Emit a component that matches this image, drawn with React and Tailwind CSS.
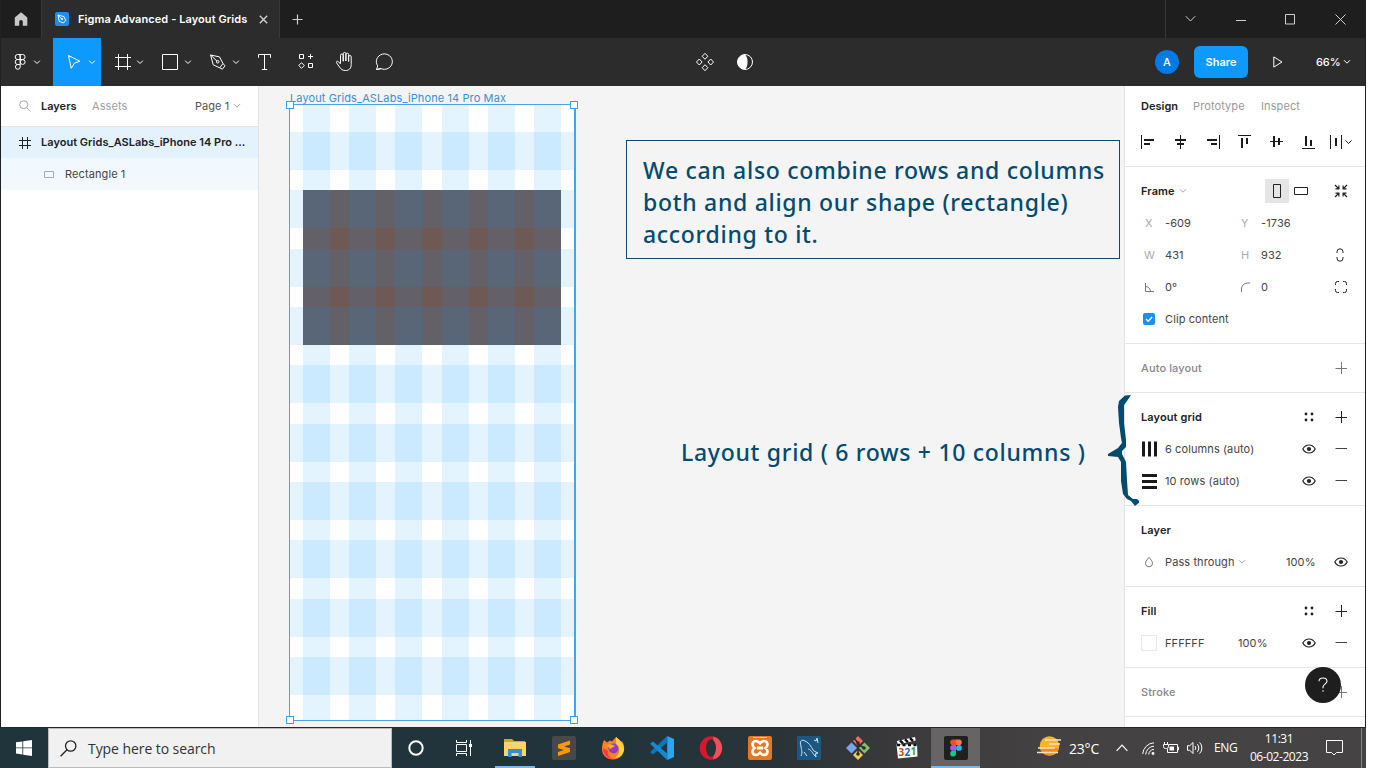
import React from 'react';

const UI = "font-['Inter',sans-serif]";
const SEGOE = "font-['Open_Sans','Noto_Sans',sans-serif]";

/* Line drawing with a pixel-sized view box */
function Draw({ w = 16, h = 16, c = '', children, sw = 1 }) {
  return (
    <svg width={w} height={h} viewBox={`0 0 ${w} ${h}`} className={`block shrink-0 ${c}`} fill="none" stroke="currentColor" strokeWidth={sw}>
      {children}
    </svg>
  );
}

function Chevron({ c = '' }) {
  return <Draw w={8} h={6} c={c}><path d="M1 1.2 4 4.2 7 1.2" /></Draw>;
}

/* ---------- Title bar ---------- */
function TitleBar() {
  return (
    <div className="flex h-[38px] shrink-0 bg-[#1e1e1e] text-[#d0d0d0]">
      <div className="flex w-[41px] items-center justify-center border-r border-[#383838]">
        <Draw w={14} h={14} c="text-[#c9c9c9]">
          <path d="M7 .3 13.3 5.6V13.8H8.8V9.8a1.8 1.8 0 0 0-3.6 0V13.8H.8V5.6Z" fill="currentColor" stroke="none" />
        </Draw>
      </div>
      <div className="flex w-[238px] items-center border-r border-[#383838] bg-[#2c2c2c] pl-[13px]">
        <Draw w={14} h={14}>
          <rect width="14" height="14" rx="2" fill="#1b8ff0" stroke="none" />
          <g stroke="#fff" strokeWidth=".9">
            <path d="M3 3 4.2 9.3 8.4 11 10.7 8.6 9 4.6Z" />
            <path d="M3 3 6.6 6.8" />
            <circle cx="7" cy="7" r=".8" />
          </g>
        </Draw>
        <span className="ml-[9px] text-[11px] font-semibold tracking-[0.08px] whitespace-pre text-white">Figma Advanced - Layout Grids</span>
        <Draw w={9} h={9} c="ml-[12px]" sw={1.4}><path d="M.8.8 8.2 8.2M8.2.8.8 8.2" /></Draw>
      </div>
      <div className="flex items-center pl-[12px]">
        <Draw w={11} h={11} sw={1.2}><path d="M5.5.5V10.5M.5 5.5H10.5" /></Draw>
      </div>
      <div className="ml-auto flex w-[200px] items-center border-l border-[#383838]">
        <div className="flex w-[50px] justify-center"><Draw w={11} h={8}><path d="M.8 1.2 5.5 6 10.2 1.2" /></Draw></div>
        <div className="flex w-[50px] justify-center"><Draw w={10} h={11}><path d="M0 6.5H10" /></Draw></div>
        <div className="flex w-[50px] justify-center"><Draw w={10} h={11}><path d="M.5.5H9.5V10H.5Z" /></Draw></div>
        <div className="flex w-[50px] justify-center"><Draw w={11} h={11}><path d="M.5.5 10.5 10.5M10.5.5.5 10.5" /></Draw></div>
      </div>
    </div>
  );
}

/* ---------- Toolbar ---------- */
const caret = <path d="M36.2 22.7 39 25.5 41.8 22.7" />;

function Tool({ w = 48, active, children }) {
  return (
    <div className={active ? 'bg-[#0d99ff] text-white' : 'text-white'}>
      <Draw w={w} h={48}>{children}</Draw>
    </div>
  );
}

function Toolbar() {
  return (
    <div className="flex h-12 shrink-0 bg-[#2c2c2c]">
      <Tool w={52}>
        <path d="M19 16.5H16.7a2.4 2.4 0 0 0 0 5H19.2ZM19.2 16.5H21.6a2.4 2.4 0 0 1 0 5H19.2ZM19 21.5H16.7a2.4 2.4 0 0 0 0 5H19.2ZM19.2 26.5H16.7a2.4 2.4 0 1 0 2.5 2.6Z" />
        <circle cx="21.7" cy="24" r="2.4" />
        <path d="M33.2 22.7 36 25.5 38.8 22.7" />
      </Tool>
      <Tool active>
        <path d="M15.5 17.5 27 23.3 21.5 25 18.2 30.3Z" />
        {caret}
      </Tool>
      <Tool>
        <path d="M17.5 16V32M26.5 16V32M14 19.5H30M14 28.5H30" />
        {caret}
      </Tool>
      <Tool>
        <path d="M13.5 16.5H28.5V31.5H13.5Z" />
        {caret}
      </Tool>
      <Tool>
        <path d="M13.6 17 16.2 26.8 22.7 29.8 26 25.5 22.5 18.9ZM13.6 17 20.2 23.3M22.7 29.8 25.4 31.2 28 27.8 26 25.5" />
        <circle cx="20.7" cy="23.8" r="1.3" />
        {caret}
      </Tool>
      <Tool w={40}>
        <path d="M13.5 19.8V16.5H25.5V19.8M19.5 16.5V31.5M16.8 31.5H22.2" />
      </Tool>
      <Tool w={40}>
        <path d="M14.5 16.5H18.5V20.5H14.5ZM23.5 25.5H27.5V29.5H23.5ZM16.5 24.7 19.3 27.5 16.5 30.3 13.7 27.5ZM25.5 16V21M23 18.5H28" />
      </Tool>
      <Tool w={40}>
        <path d="M15.5 25.5V17.3a1.35 1.35 0 0 1 2.7 0V23.5M18.2 23V15.8a1.35 1.35 0 0 1 2.7 0V23M20.9 23V16.5a1.35 1.35 0 0 1 2.7 0V23.5M23.6 23.5V18.8a1.3 1.3 0 0 1 2.6 0V26.5C26.2 30.5 24 32.5 20.5 32.5 17.5 32.5 16 31.3 14.5 29L11.5 24.7C10.9 23.5 12.5 22.6 13.5 23.7L15.5 26" />
      </Tool>
      <Tool w={40}>
        <path d="M11.5 31.5 12.7 27.9A8 7.7 0 1 1 16 30.6ZM16 30.6 11.5 31.5" />
      </Tool>
      <div className="ml-[280px] flex items-center text-white">
        <Draw w={40} h={48}>
          <path d="M20 15.3 22.8 18.3 20 21.3 17.2 18.3ZM20 26.7 22.8 29.7 20 32.7 17.2 29.7ZM14.3 21 17.1 24 14.3 27 11.5 24ZM25.7 21 28.5 24 25.7 27 22.9 24Z" />
        </Draw>
        <Draw w={40} h={48}>
          <circle cx="20" cy="24" r="7.5" />
          <path d="M20 16.5a7.5 7.5 0 0 0 0 15c1.8-1.6 2.6-4.5 2.6-7.5s-.8-5.9-2.6-7.5Z" fill="currentColor" stroke="none" />
        </Draw>
      </div>
      <div className="ml-auto flex items-center text-[11px] font-medium text-white">
        <div className="flex size-6 items-center justify-center rounded-full bg-[#007be5]">A</div>
        <div className="ml-[15px] flex h-8 w-[54px] items-center justify-center rounded-md bg-[#0d99ff] font-semibold">Share</div>
        <Draw w={10} h={12} c="ml-[25px]"><path d="M.8.9V11.1L9 6Z" /></Draw>
        <span className="ml-[33px] w-[27px] tracking-[-0.1px]">66%</span>
        <Chevron c="mr-[14px]" />
      </div>
    </div>
  );
}

/* ---------- Layers panel ---------- */
function LayersPanel() {
  return (
    <div className="flex w-[258px] shrink-0 flex-col border-r border-[#e2e2e2] bg-white text-[11px] text-[#333]">
      <div className="flex h-[41px] items-center border-b border-[#e5e5e5] pl-[18px]">
        <Draw w={12} h={12} c="text-[#a5a5a5]"><circle cx="4.7" cy="4.7" r="4" /><path d="M7.6 7.6 11.5 11.5" /></Draw>
        <span className="ml-[10px] w-[51px] font-semibold text-[#222]">Layers</span>
        <span className="w-[103px] tracking-[0.1px] text-[#a0a0a0]">Assets</span>
        <span className="w-[38px] tracking-[0.05px] text-[#555]">Page 1</span>
        <Chevron c="text-[#a0a0a0]" />
      </div>
      <div className="flex h-[31px] items-center bg-[#e4f2fd] pl-[18px]">
        <Draw w={12} h={12} c="text-[#222]"><path d="M3.5 0V12M8.5 0V12M0 3.5H12M0 8.5H12" /></Draw>
        <span className="ml-[10px] font-semibold tracking-[0.02px] whitespace-nowrap text-[#222]">Layout Grids_ASLabs_iPhone 14 Pro ...</span>
      </div>
      <div className="flex h-8 items-center bg-[#f2f9fe] pl-[43px]">
        <Draw w={10} h={7} c="text-[#a5abb0]"><path d="M.5.5H9.5V6.5H.5Z" /></Draw>
        <span className="ml-[11px] tracking-[0.1px] text-[#444]">Rectangle 1</span>
      </div>
    </div>
  );
}

/* ---------- Canvas ---------- */
function Handle({ c }) {
  return <div className={`absolute size-2 border border-[#3f9fe0] bg-white ${c}`} />;
}

function Canvas() {
  return (
    <div className={`relative min-w-0 flex-1 overflow-hidden bg-[#f4f4f4] ${UI}`}>
      <div className="absolute top-[4px] left-[31px] text-[11px] tracking-[0.11px] whitespace-nowrap text-[#3b8fd6]">Layout Grids_ASLabs_iPhone 14 Pro Max</div>
      <div className="absolute top-[18px] left-[30px] h-[617px] w-[287px] border border-[#4ba3e3] border-r-2 bg-white">
        <div className="absolute top-[85px] left-[13px] h-[155px] w-[258px] bg-[#6f5955]" />
        <div className="absolute inset-0 flex justify-between pr-[13px] pl-[13px]">
          {[0, 1, 2, 3, 4, 5].map((i) => <div key={i} className="w-[27px] bg-[#0099ff]/[0.105]" />)}
        </div>
        <div className="absolute inset-0 flex flex-col justify-between pt-[27px] pb-[25px]">
          {[0, 1, 2, 3, 4, 5, 6, 7, 8, 9].map((i) => <div key={i} className="h-[38px] bg-[#0099ff]/[0.105]" />)}
        </div>
        <Handle c="-top-1 -left-1" />
        <Handle c="-top-1 -right-1" />
        <Handle c="-bottom-1 -left-1" />
        <Handle c="-right-1 -bottom-1" />
      </div>
      <div className="absolute top-[54px] left-[367px] h-[119px] w-[494px] border border-[#0f4a6c] pt-[13px] pl-4 font-['Noto_Sans',sans-serif] text-[23px] leading-8 font-medium whitespace-nowrap text-[#004b6e]">
        <div className="tracking-[0.7px]">We can also combine rows and columns</div>
        <div className="tracking-[0.7px]">both and align our shape (rectangle)</div>
        <div className="tracking-[0.7px]">according to it.</div>
      </div>
      <div className="absolute top-[350px] left-[422px] font-['Noto_Sans',sans-serif] text-[23px] leading-8 font-medium tracking-[0.7px] whitespace-nowrap text-[#004b6e]">Layout grid ( 6 rows + 10 columns )</div>
    </div>
  );
}

/* ---------- Design panel ---------- */
const Plus = ({ c = '' }) => <Draw w={12} h={12} c={c}><path d="M6.5 0V12M.5 6.5H12" /></Draw>;
const Minus = () => <Draw w={12} h={12}><path d="M.5 5.5H12" /></Draw>;
const Dots = () => (
  <Draw w={10} h={10}>
    <g fill="currentColor" stroke="none">
      <circle cx="2" cy="2" r="1.4" /><circle cx="8" cy="2" r="1.4" /><circle cx="2" cy="8" r="1.4" /><circle cx="8" cy="8" r="1.4" />
    </g>
  </Draw>
);
const Eye = () => (
  <Draw w={14} h={10} sw={1.2}>
    <path d="M.8 5C2.2 2.4 4.4 1 7 1s4.8 1.4 6.2 4C11.8 7.6 9.6 9 7 9S2.2 7.6.8 5Z" />
    <circle cx="7" cy="5" r="2.1" fill="currentColor" stroke="none" />
  </Draw>
);

function Row({ children, c = '' }) {
  return <div className={`flex h-8 items-center ${c}`}>{children}</div>;
}
function Section({ children, c = '' }) {
  return <div className={`border-b border-[#e5e5e5] pl-4 ${c}`}>{children}</div>;
}
/* Right-aligned pair of row actions */
function Actions({ children }) {
  return <div className="ml-auto flex items-center gap-[26px] pr-[18px]">{children}</div>;
}

function DesignPanel() {
  return (
    <div className="relative w-[241px] shrink-0 border-l border-[#e2e2e2] bg-white text-[11px] tracking-[0.1px] text-[#444]">
      <div className="h-[641px] overflow-hidden">
        <Section c="h-[81px]">
          <div className="flex h-10 items-center text-[#999]">
            <span className="w-[52px] font-semibold tracking-[0.02px] text-[#222]">Design</span>
            <span className="w-[68px]">Prototype</span>
            <span>Inspect</span>
          </div>
          <div className="flex h-8 items-center text-[#1a1a1a]">
            <Draw w={32} h={16} sw={2}>
              <path d="M.5 1V15" strokeWidth="1" /><path d="M3 6H13M3 10H9" />
            </Draw>
            <Draw w={32} h={16} sw={2}>
              <path d="M7.5 1V15" strokeWidth="1" /><path d="M2 6H13M4 10H11" />
            </Draw>
            <Draw w={32} h={16} sw={2}>
              <path d="M14.5 1V15" strokeWidth="1" /><path d="M2 6H12M6 10H12" />
            </Draw>
            <Draw w={32} h={16} sw={2}>
              <path d="M1 1.5H14" strokeWidth="1" /><path d="M5 4V14M10 4V10" />
            </Draw>
            <Draw w={32} h={16} sw={2}>
              <path d="M1 7.5H14" strokeWidth="1" /><path d="M5 2V13M10 4V11" />
            </Draw>
            <Draw w={29} h={16} sw={2}>
              <path d="M1 14.5H14" strokeWidth="1" /><path d="M5 2V12M10 6V12" />
            </Draw>
            <Draw w={24} h={16} sw={2}>
              <path d="M.5 1V15M11.5 1V15" strokeWidth="1" /><path d="M6 4V12" /><path d="M15.5 6.5 18.5 9.5 21.5 6.5" strokeWidth="1" />
            </Draw>
          </div>
        </Section>

        <Section c="h-[177px] pt-2">
          <Row>
            <span className="w-[38px] font-semibold tracking-[0.1px] text-[#222]">Frame</span>
            <Chevron c="text-[#a5a5a5]" />
            <div className="ml-[78px] flex size-6 items-center justify-center bg-[#e5e5e5] text-[#222]">
              <Draw w={8} h={14}><path d="M.5.5H7.5V13.5H.5Z" /></Draw>
            </div>
            <Draw w={14} h={8} c="ml-[5px] text-[#222]"><path d="M.5.5H13.5V7.5H.5Z" /></Draw>
            <Draw w={14} h={14} c="ml-[26px] text-[#222]" sw={1.2}>
              <path d="M1 1 4.5 4.5M1.5 4.9H4.9V1.5M13 1 9.5 4.5M9.1 1.5V4.9H12.5M1 13 4.5 9.5M1.5 9.1H4.9V12.5M13 13 9.5 9.5M12.5 9.1H9.1V12.5" />
            </Draw>
          </Row>
          <Row>
            <span className="w-6 pl-1 text-[#aaa]">X</span><span className="w-[76px]">-609</span>
            <span className="w-5 text-[#aaa]">Y</span><span>-1736</span>
          </Row>
          <Row>
            <span className="w-6 pl-[3px] text-[#aaa]">W</span><span className="w-[76px]">431</span>
            <span className="w-5 text-[#aaa]">H</span><span>932</span>
            <Draw w={8} h={14} c="mr-[21px] ml-auto text-[#222]"><path d="M1 5V3.8a3 3 0 0 1 6 0V5M1 9V10.2a3 3 0 0 0 6 0V9" /></Draw>
          </Row>
          <Row>
            <div className="w-6 pl-1"><Draw w={9} h={9} c="text-[#777]"><path d="M.5 0V8.5H9M.5 3.5A5 5 0 0 1 5.5 8.5" /></Draw></div>
            <span className="w-[76px]">0°</span>
            <div className="w-5"><Draw w={9} h={10} c="text-[#777]"><path d="M.5 10V7A6 6 0 0 1 6.5 1H9" /></Draw></div>
            <span>0</span>
            <Draw w={12} h={12} c="mr-[18px] ml-auto text-[#222]"><path d="M.5 4V2.5a2 2 0 0 1 2-2H4M8 .5H9.5a2 2 0 0 1 2 2V4M11.5 8V9.5a2 2 0 0 1-2 2H8M4 11.5H2.5a2 2 0 0 1-2-2V8" /></Draw>
          </Row>
          <Row>
            <div className="ml-0.5 w-[22px]">
              <Draw w={12} h={12}><rect width="12" height="12" rx="2" fill="#1890ec" stroke="none" /><path d="M3 6 5.2 8.2 9.2 4" stroke="#fff" strokeWidth="1.3" /></Draw>
            </div>
            <span>Clip content</span>
          </Row>
        </Section>

        <Section c="flex h-[49px] items-center text-[#888]">
          <span className="font-medium tracking-[0.12px]">Auto layout</span>
          <Actions><Plus c="text-[#777]" /></Actions>
        </Section>

        <Section c="h-[113px] pt-2">
          <Row>
            <span className="font-semibold text-[#222]">Layout grid</span>
            <Actions><div className="-mr-[5px] text-[#222]"><Dots /></div><Plus c="text-[#222]" /></Actions>
          </Row>
          <Row>
            <Draw w={24} h={16} sw={3} c="text-[#1a1a1a]"><path d="M2.5.5V15.5M8.5.5V15.5M14.5.5V15.5" /></Draw>
            <span>6 columns (auto)</span>
            <Actions><div className="-mr-[7px] text-[#222]"><Eye /></div><Minus /></Actions>
          </Row>
          <Row>
            <Draw w={24} h={16} sw={3} c="text-[#1a1a1a]"><path d="M1 2.5H16M1 8.5H16M1 14.5H16" /></Draw>
            <span>10 rows (auto)</span>
            <Actions><div className="-mr-[7px] text-[#222]"><Eye /></div><Minus /></Actions>
          </Row>
        </Section>

        <Section c="h-[81px] pt-2">
          <Row><span className="font-semibold text-[#222]">Layer</span></Row>
          <Row>
            <Draw w={24} h={12} c="text-[#777]"><path d="M8 1.3C6.6 3.3 4.5 5 4.5 7.3a3.5 3.5 0 0 0 7 0C11.5 5 9.4 3.3 8 1.3Z" /></Draw>
            <span className="w-[73px]">Pass through</span>
            <Chevron c="text-[#a5a5a5]" />
            <span className="ml-10 w-12">100%</span>
            <div className="text-[#222]"><Eye /></div>
          </Row>
        </Section>

        <Section c="h-[81px] pt-2">
          <Row>
            <span className="font-semibold text-[#222]">Fill</span>
            <Actions><div className="-mr-[5px] text-[#222]"><Dots /></div><Plus c="text-[#222]" /></Actions>
          </Row>
          <Row>
            <div className="mr-2 size-4 border border-[#e8e8e8]" />
            <span className="w-[73px]">FFFFFF</span>
            <span>100%</span>
            <Actions><div className="-mr-[7px] text-[#222]"><Eye /></div><Minus /></Actions>
          </Row>
        </Section>

        <Section c="flex h-[49px] items-center text-[#888]">
          <span className="font-medium">Stroke</span>
          <Actions><Plus c="text-[#777]" /></Actions>
        </Section>
      </div>

      <div className="absolute top-[581px] left-[180px] flex size-9 items-center justify-center rounded-full bg-[#1e1e1e] text-white">
        <Draw w={10} h={16} sw={1.1}><path d="M1 4.3C1 2.3 2.6 1 5 1S9 2.3 9 4.3C9 7 5 7.2 5 10V11.2M5 13.3V14.8" /></Draw>
      </div>

      <svg width="32" height="114" viewBox="0 0 32 114" className="absolute top-[308px] -left-[18px]">
        <path d="M24 1 18 1.5 12 7 11 13 12 29 14 44 15 49 11 54 1 60 1 62 11 63 14 68 14 87 16 100 20 105 24 107 28 112 33 108 30 105 26 105 21 101 20 86 19 68 15 60 15 57 19 53 19 46 17 29 17 11 20 7Z" fill="#004b6e" />
      </svg>
    </div>
  );
}

/* ---------- Windows taskbar ---------- */
function App24({ children, open, active }) {
  return (
    <div className={`relative flex h-full w-[49px] items-center justify-center ${active ? 'bg-[#666464]' : ''}`}>
      <svg width="24" height="24" viewBox="0 0 24 24" fill="none" className="block">{children}</svg>
      {open && <div className={`absolute bottom-0 h-0.5 bg-[#76b9ed] ${active ? 'w-[49px]' : 'w-10'}`} />}
    </div>
  );
}

function Taskbar() {
  return (
    <div className={`flex h-[41px] w-[1366px] shrink-0 border-t border-[#26282a] bg-[linear-gradient(90deg,#20343b_0%,#21343b_45%,#2b3438_58%,#3b393b_66%,#434142_76%,#454344_100%)] text-white ${SEGOE}`}>
      <div className="flex w-12 items-center justify-center">
        <svg width="16" height="16" viewBox="0 0 16 16" fill="#fff"><path d="M0 2.3 6.4 1.4V7.5H0ZM7.2 1.3 16 0V7.5H7.2ZM0 8.3H6.4V14.5L0 13.6ZM7.2 8.3H16V16L7.2 14.7Z" /></svg>
      </div>
      <div className="flex w-[344px] items-center border border-[#b8bcbe] bg-[#f1f1f1] pl-[11px] text-[#333]">
        <Draw w={17} h={17} sw={1.3} c="text-[#222]"><circle cx="10.7" cy="6" r="5.2" /><path d="M7 9.8.6 16.2" /></Draw>
        <span className="ml-[11px] text-[14px] tracking-[-0.07px]">Type here to search</span>
      </div>
      <div className="flex w-12 items-center justify-center"><Draw w={16} h={16} sw={2}><circle cx="8" cy="8" r="6.7" /></Draw></div>
      <div className="flex w-[50px] items-center justify-center pr-0.5">
        <Draw w={16} h={16}><path d="M.5 0V2.5H10.5V0M.5 16V13.5H10.5V16M.5 4.5H10.5V11.5H.5ZM14.5 0V16" /><path d="M13 4H16V7H13Z" fill="currentColor" stroke="none" /></Draw>
      </div>
      <App24 open>
        <path d="M1 3H9L11 5H22V8H1Z" fill="#d9a520" /><path d="M1 6H23V20H1Z" fill="#fbd56b" /><path d="M5 13H19V21H15.5V17H8.5V21H5Z" fill="#3a8ed0" />
      </App24>
      <App24>
        <rect width="24" height="24" rx="2" fill="#484848" /><path d="M6 8.5 18 4.5V8.5L12.3 10.4 18 12.3V16L6 20V16L12 14 6 12.2Z" fill="#ff9800" />
      </App24>
      <App24>
        <path d="M3 4 6 6.5 9 4.5 11 5.5 15 1C18 3 19 5 20 6L21 5C23 8 23.5 11 23 14 22 20 17.5 23.5 12 23.5S1 19.5 1 13C1 9 2 6 3 4Z" fill="#ff7f24" />
        <path d="M15 1C19 4 23 8 23 13 23 18 19 22 14 22 20 17 19 11 15 8Z" fill="#ffd43a" />
        <path d="M2 12C2 19 7 23 13 23 8 22 6 18 7 15Z" fill="#ff3150" />
        <circle cx="12.5" cy="12.5" r="5" fill="#9b3ac0" /><path d="M6 9C9 7 12 9 14 10L9 13Z" fill="#ffb02e" />
      </App24>
      <App24>
        <path d="M17.2 0 24 3V21L17.2 24Z" fill="#2aa6f2" /><path d="M17.2 0V6.5L3 18.5 0 16.2Z" fill="#0877bd" /><path d="M17.2 24V17.5L3 5.5 0 7.8Z" fill="#1489d2" />
      </App24>
      <App24>
        <ellipse cx="12" cy="12" rx="11.3" ry="11.7" fill="#d9162a" /><path d="M14 .5C26 3 26 21 14 23.5L16 12Z" fill="#ef5158" /><ellipse cx="12" cy="12" rx="5" ry="8.8" fill="#26343a" />
      </App24>
      <App24>
        <rect width="24" height="24" rx="2" fill="#e87722" />
        <path d="M8 5C10 5 11 6.5 12 7.5 13 6.5 14 5 16 5 20 5 20.5 10 17.5 12 20.5 14 20 19 16 19 14 19 13 17.5 12 16.5 11 17.5 10 19 8 19 4 19 3.5 14 6.5 12 3.5 10 4 5 8 5Z" stroke="#fff" strokeWidth="2.6" /><path d="M9 12H15" stroke="#fff" strokeWidth="3" /><path d="M5 1.5H19" stroke="#f6c79a" />
      </App24>
      <App24>
        <rect width="24" height="24" rx="1" fill="#1d577f" /><path d="M4 20C6 16 4 13 4 10 2 5 5 3 8 5 13 7 15 13 17 15L21 17 18.5 17.5 19 21 16 17.5C14 14 12 13 11 13M7 16 10 20M17 4 19 5 20 2 21 7" stroke="#d5e4ed" strokeWidth="1" />
      </App24>
      <App24>
        <path d="M12 0 17 5 12 10 7 5Z" fill="#ef6d62" /><path d="M5.5 6.5 11 12 5.5 17.5 0 12Z" fill="#78a6e8" /><path d="M18.5 6.5 24 12 18.5 17.5 13 12Z" fill="#83c266" /><path d="M12 14 17 19 12 24 7 19Z" fill="#f0ce58" />
        <path d="M8 2 12 7V19M12 8 18 12" stroke="#2d2d2d" strokeWidth="1.6" /><circle cx="12" cy="7" r="1.8" fill="#2d2d2d" /><circle cx="18" cy="12" r="1.8" fill="#2d2d2d" /><circle cx="12" cy="18" r="1.8" fill="#2d2d2d" />
      </App24>
      <App24>
        <path d="M2 5 20 1 20.7 4.5 2.7 8.5Z" fill="#fff" /><path d="M5 4.5 8 7.3M10 3.3 13 6.2M15 2.2 18 5" stroke="#111" strokeWidth="2.4" />
        <path d="M1.5 8.5H22L22.5 20.5 3 22.5Z" fill="#fff" /><path d="M2 9H22" stroke="#111" strokeWidth="2.4" strokeDasharray="3 2.5" />
        <g stroke="none" className="font-['Open_Sans',sans-serif] text-[10px] font-bold">
          <text x="3.6" y="20" fill="#d8431f">3</text><text x="9.6" y="19.5" fill="#2265c8">2</text><text x="15.6" y="19" fill="#3a9a3a">1</text>
        </g>
      </App24>
      <App24 open active>
        <rect width="24" height="24" rx="2" fill="#202020" />
        <path d="M12 3.5H9a2.8 2.8 0 0 0 0 5.6H12Z" fill="#f24e1e" /><path d="M12 3.5H15a2.8 2.8 0 0 1 0 5.6H12Z" fill="#ff7262" /><path d="M12 9.1H9a2.8 2.8 0 0 0 0 5.6H12Z" fill="#a259ff" /><circle cx="15" cy="11.9" r="2.9" fill="#1abcfe" /><path d="M12 14.7H9a2.9 2.9 0 1 0 3 2.9Z" fill="#0acf83" />
      </App24>

      <div className="flex flex-1 items-center">
        <svg width="24" height="20" viewBox="0 0 24 20" className="mb-1 ml-[57px] block" fill="none">
          <circle cx="12.5" cy="10" r="9.8" fill="#f6b32c" /><path d="M3 12A9.8 9.8 0 0 0 22 12Z" fill="#f08a24" />
          <path d="M8 4H24M12 8H23M1 12H18M0 16.5H21" stroke="#f6e3bd" strokeWidth="1.5" />
        </svg>
        <span className="ml-2 w-[47px] text-[14px] tracking-[-0.2px]">23°C</span>
        <Draw w={12} h={8} sw={1.2}><path d="M.6 6.8 6 1.2 11.4 6.8" /></Draw>
        <Draw w={13} h={13} c="ml-[14px]">
          <path d="M.7 12A12 12 0 0 1 12 .8M3.7 12.5A9 9 0 0 1 12 4.1M6.7 12.5A6 6 0 0 1 12 7.3" /><circle cx="11" cy="11.5" r="1.4" fill="currentColor" stroke="none" />
        </Draw>
        <Draw w={16} h={12} c="ml-[8px]"><path d="M6 2.5H14.5V10.5H4.5V7M14.5 5H15.5V8H14.5M.5 2.5H5.5V4.5a2 2 0 0 1-2 2H2.5a2 2 0 0 1-2-2ZM1.5 0V2.5M4.5 0V2.5" /><path d="M6.5 4.5H11V8.5H6.5Z" fill="currentColor" stroke="none" /></Draw>
        <Draw w={17} h={14} c="ml-[8px]"><path d="M.5 4.7H2.8L6 1.5V12.5L2.8 9.3H.5ZM8 5a3 3 0 0 1 0 4M10.3 3.2a5.5 5.5 0 0 1 0 7.6M12.6 1.4a8 8 0 0 1 0 11.2" /></Draw>
        <span className="ml-[10px] w-[24px] text-[12px] tracking-[-0.3px]">ENG</span>
        <div className="ml-[10px] w-[62px] text-center text-[12px] leading-[18px] tracking-[-0.45px] whitespace-nowrap">
          <div>11:31</div>
          <div>06-02-2023</div>
        </div>
        <Draw w={17} h={16} c="ml-[16px]"><path d="M.5.5H16.5V12.5H10.5L8 15 5.5 12.5H.5Z" /></Draw>
      </div>
      <div className="mr-[4px] w-px bg-[#858585]" />
    </div>
  );
}

export default function App() {
  return (
    <div className="h-[768px] w-[1388px] overflow-hidden bg-white">
      <div className={`flex h-[727px] w-[1366px] flex-col border-r border-l border-[#202124] ${UI}`}>
        <TitleBar />
        <Toolbar />
        <div className="flex min-h-0 flex-1">
          <LayersPanel />
          <Canvas />
          <DesignPanel />
        </div>
      </div>
      <Taskbar />
    </div>
  );
}
